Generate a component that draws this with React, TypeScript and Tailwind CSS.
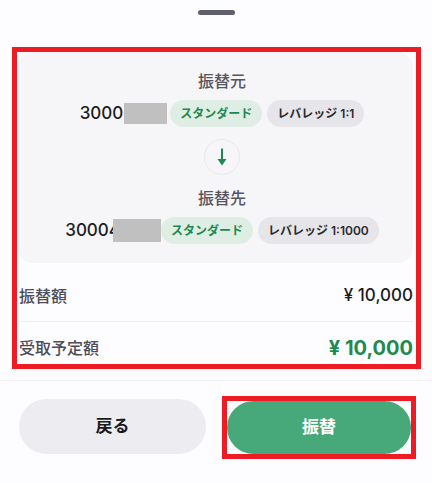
import React from 'react';

const font = { fontFamily: 'Inter, "Noto Sans CJK JP", sans-serif' };

function DownArrow() {
  return (
    <svg width="22" height="22" viewBox="0 0 22 22">
      <line x1="11" y1="2.5" x2="11" y2="14" stroke="#1f8a4f" strokeWidth="2" />
      <polygon points="6.5,13 15.5,13 11,19.5" fill="#1f8a4f" />
    </svg>
  );
}

function Badge({ green, children }: { green?: boolean; children: React.ReactNode }) {
  return (
    <span
      className={
        green
          ? 'h-[27px] px-[10px] flex items-center rounded-full bg-[#dfeee5] text-[#21884f] text-[12px] font-semibold whitespace-nowrap'
          : 'h-[27px] px-[10px] flex items-center rounded-full bg-[#e6e5ea] text-[#2a2a2e] text-[12px] font-semibold whitespace-nowrap'
      }
    >
      {children}
    </span>
  );
}

export default function App() {
  return (
    <div className="w-[432px] h-[483px] bg-[#fdfdff] overflow-hidden" style={font}>
      {/* drag handle */}
      <div className="pt-[10px] flex justify-center">
        <div className="w-[37px] h-[5px] rounded-full bg-[#5f5f6b]" />
      </div>

      {/* highlighted summary */}
      <div className="mt-[32px] ml-[12px] w-[409px] h-[322px] border-[5px] border-[#ed1c24]">
        <div className="w-[396px] h-[211px] rounded-[16px] bg-[#f6f5f8] flex flex-col items-center pl-[14px] pt-[17px]">
          <div className="text-[16px] leading-[24px] font-medium text-[#56555f]">振替元</div>
          <div className="mt-[7px] flex items-center">
            <span className="text-[17px] font-medium text-[#1c1c1e]">3000</span>
            <span className="ml-[1px] w-[43px] h-[21px] bg-[#c0c0c0]" />
            <span className="ml-[3px]"><Badge green>スタンダード</Badge></span>
            <span className="ml-[5px]"><Badge>レバレッジ 1:1</Badge></span>
          </div>
          <div className="mt-[12px] w-[36px] h-[36px] rounded-full border border-[#e8e7ec] flex items-center justify-center">
            <DownArrow />
          </div>
          <div className="mt-[11px] text-[16px] leading-[24px] font-medium text-[#56555f]">振替先</div>
          <div className="mt-[7px] flex items-center">
            <span className="text-[17px] font-medium text-[#1c1c1e]">30004</span>
            <span className="-ml-[7px] w-[48px] h-[23px] bg-[#c0c0c0]" />
            <Badge green>スタンダード</Badge>
            <span className="ml-[5px]"><Badge>レバレッジ 1:1000</Badge></span>
          </div>
        </div>

        <div className="pl-[2px] pr-[3px]">
          <div className="h-[58px] pt-[8px] flex items-center justify-between">
            <span className="text-[16px] font-medium text-[#4d4c57]">振替額</span>
            <span className="text-[17px] font-medium text-[#1c1c1e]">¥ 10,000</span>
          </div>
          <div className="h-[1px] bg-[#efeff2]" />
          <div className="h-[42px] pt-[10px] flex items-center justify-between">
            <span className="text-[16px] font-medium text-[#4d4c57]">受取予定額</span>
            <span className="text-[20px] font-bold text-[#1f8a4f]">¥ 10,000</span>
          </div>
        </div>
      </div>

      <div className="mt-[11px] h-[1px] bg-[#f1f1f6]" />

      {/* actions */}
      <div className="flex items-start">
        <button className="ml-[19px] mt-[18px] w-[187px] h-[55px] rounded-full bg-[#edecf0] text-[17px] font-bold text-[#1a1a1a]">
          戻る
        </button>
        <div className="ml-[16px] mt-[15px] w-[194px] h-[63px] border-[5px] border-[#ed1c24]">
          <button className="w-full h-full rounded-full bg-[#47a979] text-[17px] font-bold text-white">
            振替
          </button>
        </div>
      </div>
    </div>
  );
}
